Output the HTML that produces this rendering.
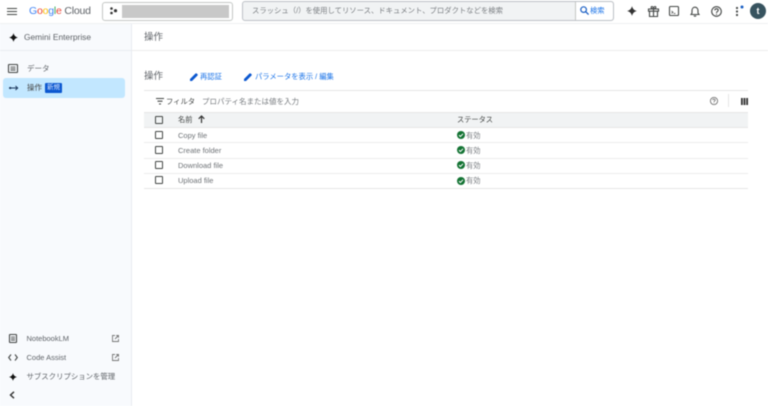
<!DOCTYPE html>
<html lang="ja"><head><meta charset="utf-8"><style>
html,body{margin:0;padding:0;width:768px;height:406px;overflow:hidden;background:#fff}
body{position:relative;font-family:"Liberation Sans","Noto Sans CJK JP",sans-serif;color:#5f6368;filter:blur(.45px)}
.a{position:absolute;white-space:nowrap}
svg{position:absolute;overflow:visible}
.l{position:absolute;height:1px}
.cb{position:absolute;left:155px;width:6px;height:6px;border:1.8px solid #444746;border-radius:1px}
.n{position:absolute;left:178px;font-size:7.5px;line-height:10px;color:#6f7377}
.st{position:absolute;left:466px;font-size:7.2px;line-height:10px;color:#777b7f}
.ok{position:absolute;left:457px;width:8px;height:8px}
.side{font-size:7.5px;line-height:10px;color:#5f6368}
.blue{color:#1a73e8;font-size:7.5px;line-height:10px}
</style></head><body>
<div class="a" style="left:0;top:23px;width:768px;height:1px;background:#eef0f2"></div>
<div class="a" style="left:0;top:24px;width:131px;height:382px;background:#f8fafd"></div>
<div class="l" style="left:131px;top:24px;width:1px;height:382px;background:#e8ecf1"></div>
<div class="l" style="left:0;top:50px;width:131px;background:#e8ecf1"></div>
<div class="l" style="left:132px;top:50px;width:636px;background:#ececec"></div>

<svg style="left:7px;top:8px" width="10" height="7"><path d="M0 .5H10M0 3.5H10M0 6.5H10" stroke="#444746" stroke-width="1.1"/></svg>
<div class="a" style="left:29px;top:4px;font-size:10.5px;line-height:14px;letter-spacing:-.2px"><span style="color:#4285f4">G</span><span style="color:#ea4335">o</span><span style="color:#fbbc04">o</span><span style="color:#4285f4">g</span><span style="color:#34a853">l</span><span style="color:#ea4335">e</span><span style="color:#5f6368"> Cloud</span></div>

<div class="a" style="left:102px;top:2px;width:129px;height:17px;border:1px solid #c4c7c5;border-radius:3px;background:#fff"></div>
<svg style="left:110px;top:7px" width="8" height="8"><circle cx="1.5" cy="1.5" r="1.3" fill="#333"/><circle cx="1.5" cy="6" r="1.3" fill="#333"/><circle cx="5.5" cy="3.7" r="1.6" fill="#333"/></svg>
<div class="a" style="left:122px;top:5px;width:107px;height:13px;background:#c8c8c8"></div>

<div class="a" style="left:242px;top:1px;width:370px;height:18px;border:1px solid #bdc1c6;border-radius:3px;background:#f1f3f4"></div>
<div class="a" style="left:575px;top:2px;width:37px;height:18px;background:#fff;border-left:1px solid #c4c7c5;border-radius:0 3px 3px 0"></div>
<div class="a" style="left:252px;top:5px;font-size:7.35px;line-height:11px;color:#7a7e82">スラッシュ（/）を使用してリソース、ドキュメント、プロダクトなどを検索</div>
<svg style="left:580px;top:6px" width="9" height="9"><circle cx="3.6" cy="3.6" r="2.8" fill="none" stroke="#1a5fc4" stroke-width="1.2"/><path d="M5.6 5.6L8.6 8.6" stroke="#1a5fc4" stroke-width="1.3"/></svg>
<div class="a blue" style="left:590px;top:6px;font-size:7.3px">検索</div>

<svg style="left:627px;top:6px" width="10" height="10"><path d="M5 0C5.6 2.8 7.2 4.4 10 5 7.2 5.6 5.6 7.2 5 10 4.4 7.2 2.8 5.6 0 5 2.8 4.4 4.4 2.8 5 0Z" fill="#333"/></svg>
<svg style="left:648px;top:6px" width="11" height="11" fill="none" stroke="#444746" stroke-width="1.1"><path d="M.5 3H10.5V5.2H.5ZM1.5 5.2V10.5H9.5V5.2M5.5 3V10.5M5.5 3C3 3 2.5 .5 4 .5 5 .5 5.5 2 5.5 3 5.5 2 6 .5 7 .5 8.5 .5 8 3 5.5 3Z"/></svg>
<svg style="left:669px;top:6px" width="10" height="10" fill="none" stroke="#444746" stroke-width="1.1"><rect x=".5" y=".5" width="9" height="9" rx="1"/><path d="M2.5 5L4 6.2 2.5 7.4M4.6 7.5H6.5" stroke-width=".8"/></svg>
<svg style="left:690px;top:6px" width="10" height="11" fill="none" stroke="#444746" stroke-width="1.1"><path d="M1 8.5H9L8 7V4.5C8 2.7 6.8 1.2 5 1.2S2 2.7 2 4.5V7ZM4 9.5C4.2 10.4 5.8 10.4 6 9.5"/></svg>
<svg style="left:711px;top:6px" width="11" height="11" fill="none" stroke="#444746" stroke-width="1.1"><circle cx="5.5" cy="5.5" r="4.8"/><path d="M3.8 4.3C3.9 2.2 7.2 2.4 7.2 4.3 7.2 5.5 5.5 5.5 5.5 7"/><circle cx="5.5" cy="8.3" r=".6" fill="#444746" stroke="none"/></svg>
<svg style="left:735px;top:5px" width="11" height="12"><circle cx="2" cy="3" r="1.1" fill="#444746"/><circle cx="2" cy="6.5" r="1.1" fill="#444746"/><circle cx="2" cy="10" r="1.1" fill="#444746"/><circle cx="7" cy="2" r="1.5" fill="#1a5fc4"/></svg>
<div class="a" style="left:750px;top:3px;width:16px;height:16px;border-radius:50%;background:#37535f;color:#fff;font-size:9px;line-height:16px;text-align:center;font-weight:bold">t</div>

<svg style="left:9px;top:32.5px" width="9" height="9"><path d="M4.5 0C5 2.5 6.5 4 9 4.5 6.5 5 5 6.5 4.5 9 4 6.5 2.5 5 0 4.5 2.5 4 4 2.5 4.5 0Z" fill="#111"/></svg>
<div class="a" style="left:24px;top:32px;font-size:8.4px;line-height:11px;color:#5f6368">Gemini Enterprise</div>

<svg style="left:8px;top:64px" width="10" height="9" fill="none" stroke="#444746" stroke-width="1.1"><rect x=".5" y=".5" width="9" height="8" rx=".5"/><path d="M2.5 3H7.5M2.5 4.6H7.5M2.5 6.2H7.5" stroke-width=".8"/></svg>
<div class="a side" style="left:27px;top:63.5px">データ</div>
<div class="a" style="left:3px;top:78px;width:122px;height:20px;border-radius:3px;background:#c2e7ff"></div>
<svg style="left:9px;top:85px" width="9" height="6" fill="none" stroke="#1f3a5f" stroke-width="1"><path d="M0 3H9"/><circle cx="1.2" cy="3" r="1.1" fill="#1f3a5f" stroke="none"/><path d="M6.5 1L8.7 3 6.5 5"/></svg>
<div class="a side" style="left:27px;top:83px;color:#444">操作</div>
<div class="a" style="left:45px;top:83px;width:17px;height:10px;background:#0b57d0;color:#d8e6ff;font-size:6.5px;line-height:10px;text-align:center;border-radius:1px">新規</div>

<div class="a" style="left:144px;top:30.5px;font-size:9.5px;line-height:13px;color:#5f6368">操作</div>
<div class="a" style="left:144px;top:70px;font-size:9.5px;line-height:13px;color:#5f6368">操作</div>
<svg style="left:190px;top:73px" width="8" height="8"><path d="M0 8V6L5.5.5C5.9.1 6.3.1 6.7.5L7.5 1.3C7.9 1.7 7.9 2.1 7.5 2.5L2 8Z" fill="#0b57d0"/></svg>
<div class="a blue" style="left:200px;top:71.5px;font-size:7.3px">再認証</div>
<svg style="left:244px;top:73px" width="8" height="8"><path d="M0 8V6L5.5.5C5.9.1 6.3.1 6.7.5L7.5 1.3C7.9 1.7 7.9 2.1 7.5 2.5L2 8Z" fill="#0b57d0"/></svg>
<div class="a blue" style="left:255px;top:71.5px;font-size:7.3px">パラメータを表示 / 編集</div>

<div class="l" style="left:144px;top:90px;width:604px;background:#e6e6e6"></div>
<svg style="left:156px;top:98px" width="8" height="7"><path d="M0 .5H8M1.5 3.2H6.5M3 6H5" stroke="#444746" stroke-width="1.1"/></svg>
<div class="a" style="left:166px;top:96.5px;font-size:7.3px;line-height:10px;color:#444746">フィルタ</div>
<div class="a" style="left:202px;top:96.5px;font-size:7.5px;line-height:10px;color:#777b7f">プロパティ名または値を入力</div>
<svg style="left:710px;top:97px" width="8" height="8" fill="none" stroke="#666" stroke-width=".8"><circle cx="4" cy="4" r="3.6"/><path d="M2.8 3.1C2.9 1.7 5.2 1.8 5.2 3.1 5.2 4 4 4 4 5"/><circle cx="4" cy="6" r=".4" fill="#666" stroke="none"/></svg>
<div class="l" style="left:728px;top:94px;width:1px;height:13px;background:#e6e6e6"></div>
<svg style="left:741px;top:98px" width="7" height="7"><path d="M0 0H1.8V7H0ZM2.6 0H4.4V7H2.6ZM5.2 0H7V7H5.2Z" fill="#333"/></svg>

<div class="a" style="left:144px;top:112px;width:604px;height:15px;background:#f1f3f4;border-top:1px solid #e6e6e6"></div>
<div class="l" style="left:144px;top:127px;width:604px;background:#e6e6e6"></div>
<div class="l" style="left:144px;top:142px;width:604px;background:#ececec"></div>
<div class="l" style="left:144px;top:158px;width:604px;background:#ececec"></div>
<div class="l" style="left:144px;top:173px;width:604px;background:#ececec"></div>
<div class="l" style="left:144px;top:188px;width:604px;background:#e6e6e6"></div>

<div class="cb" style="top:116px"></div>
<div class="n" style="top:114.5px;color:#444746;font-size:7.2px">名前</div>
<svg style="left:198px;top:115px" width="7" height="8"><path d="M3.5 8V1M.7 3.8L3.5 1 6.3 3.800" fill="none" stroke="#333" stroke-width="1.2"/></svg>
<div class="a" style="left:457px;top:114.5px;font-size:7.2px;line-height:10px;color:#444746">ステータス</div>

<div class="cb" style="top:131px"></div><div class="n" style="top:130.5px">Copy file</div>
<svg class="ok" style="top:131px" viewBox="0 0 8 8"><circle cx="4" cy="4" r="4" fill="#137333"/><path d="M2 4.1L3.4 5.5 6 2.8" fill="none" stroke="#fff" stroke-width="1"/></svg><div class="st" style="top:130.5px">有効</div>
<div class="cb" style="top:146px"></div><div class="n" style="top:145.5px">Create folder</div>
<svg class="ok" style="top:146px" viewBox="0 0 8 8"><circle cx="4" cy="4" r="4" fill="#137333"/><path d="M2 4.1L3.4 5.5 6 2.8" fill="none" stroke="#fff" stroke-width="1"/></svg><div class="st" style="top:145.5px">有効</div>
<div class="cb" style="top:161px"></div><div class="n" style="top:160.5px">Download file</div>
<svg class="ok" style="top:161px" viewBox="0 0 8 8"><circle cx="4" cy="4" r="4" fill="#137333"/><path d="M2 4.1L3.4 5.5 6 2.8" fill="none" stroke="#fff" stroke-width="1"/></svg><div class="st" style="top:160.5px">有効</div>
<div class="cb" style="top:176px"></div><div class="n" style="top:176px">Upload file</div>
<svg class="ok" style="top:177px" viewBox="0 0 8 8"><circle cx="4" cy="4" r="4" fill="#137333"/><path d="M2 4.1L3.4 5.5 6 2.8" fill="none" stroke="#fff" stroke-width="1"/></svg><div class="st" style="top:176px">有効</div>

<svg style="left:9px;top:334px" width="8" height="9" fill="none" stroke="#444746" stroke-width="1.1"><rect x=".5" y=".5" width="7" height="8" rx=".5"/><path d="M2 3H6M2 4.6H6M2 6.2H6" stroke-width=".8"/></svg>
<div class="a side" style="left:26.5px;top:334px">NotebookLM</div>
<svg style="left:112px;top:335px" width="7" height="7" fill="none" stroke="#777" stroke-width=".9"><path d="M3 .5H.5V6.5H6.5V4M3 4L6.5.5M4.2.5H6.5V2.8"/></svg>
<svg style="left:8px;top:354px" width="10" height="7" fill="none" stroke="#444746" stroke-width="1.1"><path d="M3 .5L.7 3.5 3 6.5M7 .5L9.3 3.5 7 6.5"/></svg>
<div class="a side" style="left:26.5px;top:353px">Code Assist</div>
<svg style="left:112px;top:354px" width="7" height="7" fill="none" stroke="#777" stroke-width=".9"><path d="M3 .5H.5V6.5H6.5V4M3 4L6.5.5M4.2.5H6.5V2.8"/></svg>
<svg style="left:9px;top:373px" width="8" height="8"><path d="M4 0C4.4 2.2 5.8 3.6 8 4 5.8 4.4 4.4 5.8 4 8 3.6 5.8 2.2 4.4 0 4 2.2 3.6 3.6 2.2 4 0Z" fill="#111"/></svg>
<div class="a side" style="left:26.5px;top:372px;font-size:7.4px">サブスクリプションを管理</div>
<svg style="left:9px;top:391px" width="6" height="8"><path d="M5 .8L1.5 4 5 7.2" fill="none" stroke="#333" stroke-width="1.4"/></svg>
</body></html>
